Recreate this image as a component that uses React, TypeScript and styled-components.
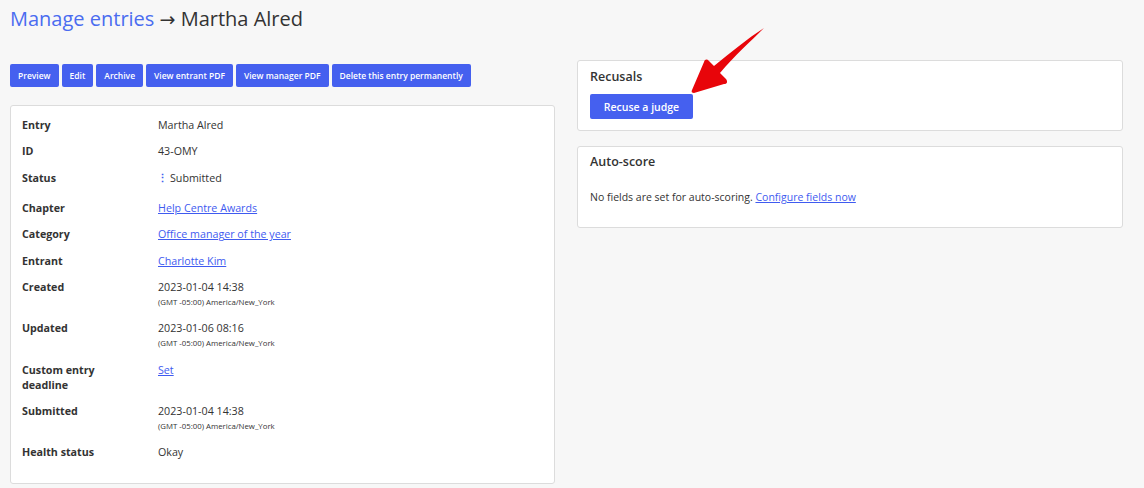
import { type FC } from "react";
import styled, { createGlobalStyle } from "styled-components";

const GlobalStyle = createGlobalStyle`
    body {
        margin:0;
        background:#f7f7f7;
        font-family:"Open Sans", "Liberation Sans", sans-serif;
        color:#333;
    }
`;

interface IRow {
    label: string;
    value: string;
    link?: boolean;
    zone?: string;
    status?: boolean;
}

const rows: IRow[] = [
    { label: "Entry", value: "Martha Alred" },
    { label: "ID", value: "43-OMY" },
    { label: "Status", value: "Submitted", status: true },
    { label: "Chapter", value: "Help Centre Awards", link: true },
    { label: "Category", value: "Office manager of the year", link: true },
    { label: "Entrant", value: "Charlotte Kim", link: true },
    { label: "Created", value: "2023-01-04 14:38", zone: "(GMT -05:00) America/New_York" },
    { label: "Updated", value: "2023-01-06 08:16", zone: "(GMT -05:00) America/New_York" },
    { label: "Custom entry deadline", value: "Set", link: true },
    { label: "Submitted", value: "2023-01-04 14:38", zone: "(GMT -05:00) America/New_York" },
    { label: "Health status", value: "Okay" },
];

const actions = ["Preview", "Edit", "Archive", "View entrant PDF", "View manager PDF", "Delete this entry permanently"];

const App: FC = () => {
    return (
        <Page>
            <GlobalStyle />
            <Title>
                <TitleLink>Manage entries</TitleLink> <Sep>→</Sep> Martha Alred
            </Title>
            <Columns>
                <div>
                    <Toolbar>
                        {actions.map((a) => (
                            <ActionButton key={a}>{a}</ActionButton>
                        ))}
                    </Toolbar>
                    <Card>
                        {rows.map((row) => (
                            <Row key={row.label} $status={row.status}>
                                <Label>{row.label}</Label>
                                <Value>
                                    {row.status && <Dots>⋮</Dots>}
                                    {row.link ? <Link href="#">{row.value}</Link> : row.value}
                                    {row.zone && <Zone>{row.zone}</Zone>}
                                </Value>
                            </Row>
                        ))}
                    </Card>
                </div>
                <Side>
                    <Panel>
                        <PanelTitle>Recusals</PanelTitle>
                        <RecuseButton>Recuse a judge</RecuseButton>
                    </Panel>
                    <Panel $tall>
                        <PanelTitle>Auto-score</PanelTitle>
                        <PanelText>
                            No fields are set for auto-scoring. <Link href="#">Configure fields now</Link>
                        </PanelText>
                    </Panel>
                    <Arrow width="80" height="72" viewBox="0 0 80 72">
                        <path d="M75 2 C62 15 45 30 31 47 L37 53 C39 56 38 58 35 58 L5 67 C3 67 2 66 3 64 L15 36 C16 33 18 33 20 35 L25 40 C42 26 58 13 75 2 Z" fill="#e8050a" />
                    </Arrow>
                </Side>
            </Columns>
        </Page>
    );
};

export default App;

const Page = styled.div`
    padding:4px 21px 0 10px;
`;

const Title = styled.h1`
    margin:0;
    font-size:20px;
    font-weight:400;
    line-height:30px;
    color:#333;
`;

const TitleLink = styled.span`
    color:#4a6cf0;
`;

const Sep = styled.span`
    font-family:"DejaVu Sans", sans-serif;
    font-size:19px;
`;

const Columns = styled.div`
    display:grid;
    grid-template-columns:545px 546px;
    gap:22px;
    margin-top:26px;
`;

const Toolbar = styled.div`
    display:flex;
    gap:3px;
    margin-top:4px;
`;

const ActionButton = styled.button`
    flex-shrink:0;
    height:23px;
    padding:0 8px;
    border:none;
    border-radius:2px;
    background:#4560ef;
    color:#fff;
    font-family:inherit;
    font-size:8.5px;
    font-weight:600;
    white-space:nowrap;
`;

const Card = styled.div`
    margin-top:18px;
    background:#fff;
    border:1px solid #dcdcdc;
    border-radius:3px;
    padding:12px 11px 12px;
`;

const Row = styled.div<{ $status?: boolean }>`
    display:grid;
    grid-template-columns:136px 1fr;
    font-size:10.7px;
    line-height:15px;
    padding-bottom:${(p) => (p.$status ? "15.5px" : "11.3px")};
`;

const Label = styled.div`
    font-weight:700;
    color:#333;
    padding-right:20px;
`;

const Value = styled.div`
    color:#333;
`;

const Zone = styled.div`
    font-size:7.8px;
    line-height:15px;
`;

const Dots = styled.span`
    display:inline-block;
    color:#4560ef;
    font-weight:700;
    width:13px;
    margin-left:-1px;
`;

const Link = styled.a`
    color:#3f5bf0;
    text-decoration:underline;
`;

const Side = styled.div`
    position:relative;
    display:flex;
    flex-direction:column;
    gap:15px;
`;

const Panel = styled.div<{ $tall?: boolean }>`
    background:#fff;
    border:1px solid #dcdcdc;
    border-radius:3px;
    padding:${(p) => (p.$tall ? "7px 12px 22px" : "8px 12px 11px")};
`;

const PanelTitle = styled.div`
    font-size:12.5px;
    font-weight:600;
    line-height:16px;
    color:#333;
`;

const RecuseButton = styled.button`
    margin-top:9px;
    width:103px;
    height:25px;
    border:none;
    border-radius:2px;
    background:#4560ef;
    color:#fff;
    font-family:inherit;
    font-size:10.5px;
    font-weight:600;
`;

const PanelText = styled.div`
    margin-top:19px;
    font-size:10.5px;
    line-height:16px;
    color:#333;
`;

const Arrow = styled.svg`
    position:absolute;
    left:112px;
    top:-34px;
`;
